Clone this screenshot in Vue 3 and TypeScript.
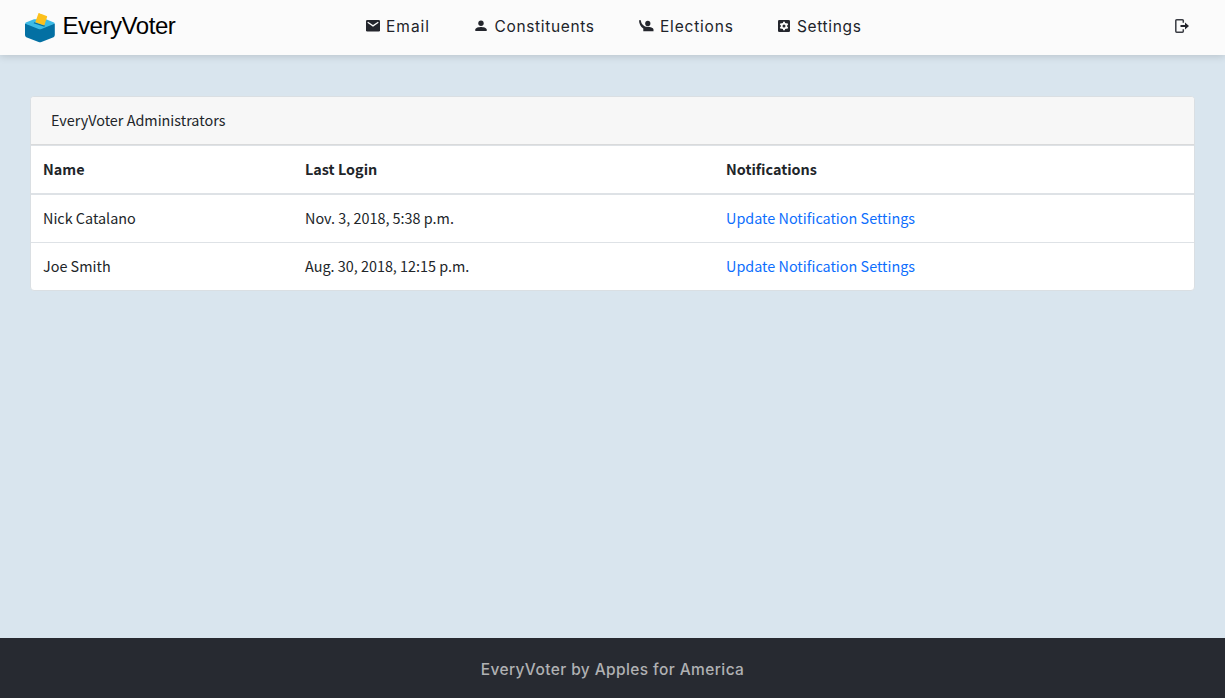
<script setup lang="ts">
interface NavItem { key: string; label: string }
interface Admin { name: string; lastLogin: string }

const navItems: NavItem[] = [
  { key: 'email', label: 'Email' },
  { key: 'constituents', label: 'Constituents' },
  { key: 'elections', label: 'Elections' },
  { key: 'settings', label: 'Settings' },
]

const admins: Admin[] = [
  { name: 'Nick Catalano', lastLogin: 'Nov. 3, 2018, 5:38 p.m.' },
  { name: 'Joe Smith', lastLogin: 'Aug. 30, 2018, 12:15 p.m.' },
]
</script>

<template>
  <div class="page">
    <header class="navbar">
      <a class="brand">
        <svg class="brand-mark" width="30" height="30" viewBox="0 0 30 30">
          <path d="M0 10.500 15 14 29.800 10.500V22Q29.800 23.500 28.500 24.200L16.400 29Q15 29.600 13.600 29L1.300 24.200Q0 23.500 0 22Z" fill="#0370a3" />
          <path d="M.8 9.600 9 6.300H21L29 9.600Q30 10.400 28.800 11.100L16.500 15.900Q15 16.500 13.500 15.900L1 11.100Q-.2 10.400 .8 9.600Z" fill="#3cbbe6" />
          <path d="M9.300 9.200 20 12.500 19.300 13.700 8.600 10.300Z" fill="#0370a3" />
          <path d="M13.400 .6Q13.700-.1 14.500 .2L21.600 3.100Q22.300 3.400 22.100 4.100L19.300 12.600 10.300 9.300Z" fill="#fcc01c" />
        </svg>
        <span class="brand-name">EveryVoter</span>
      </a>

      <nav class="menu">
        <a v-for="item in navItems" :key="item.key" class="menu-item" :class="item.key">
          <svg v-if="item.key === 'email'" width="14" height="12" viewBox="0 0 14 12">
            <rect x="0" y="0" width="14" height="11.500" rx="1.300" fill="#24262d" />
            <path d="M1.700 2.300 7 5.900 12.300 2.300" fill="none" stroke="#fbfbfb" stroke-width="1.300" />
          </svg>
          <svg v-else-if="item.key === 'constituents'" width="12" height="12" viewBox="0 0 12 12">
            <circle cx="6" cy="3.200" r="2.700" fill="#24262d" />
            <path d="M.3 11V9.600C.3 7.800 4 7 6 7s5.700 .8 5.700 2.600V11Z" fill="#24262d" />
          </svg>
          <svg v-else-if="item.key === 'elections'" width="15" height="12" viewBox="0 0 15 12">
            <circle cx="8.800" cy="3.400" r="2.600" fill="#24262d" />
            <path d="M0 .3H1.900C2 2.600 3 4.700 5.200 5.900 6.200 6.500 7.300 6.700 8.800 6.800c2.300 .1 5.700 1 5.700 2.800V11.200H4.300V8.500C1.500 6.900 .1 3.600 0 .3Z" fill="#24262d" />
          </svg>
          <svg v-else width="12" height="12" viewBox="0 0 12 12">
            <rect width="12" height="12" rx="1.300" fill="#24262d" />
            <path d="M6 1.700V10.300M2.300 3.850 9.700 8.150M9.700 3.850 2.300 8.150" stroke="#fbfbfb" stroke-width="1.900" />
            <circle cx="6" cy="6" r="3.200" fill="#fbfbfb" />
            <circle cx="6" cy="6" r="1.500" fill="#24262d" />
          </svg>
          <span>{{ item.label }}</span>
        </a>
      </nav>

      <a class="logout">
        <svg width="15" height="14" viewBox="0 0 15 14">
          <path d="M8.300 3.800V1.700Q8.300 .8 7.400 .8H1.700Q.8 .8 .8 1.700V12.300Q.8 13.200 1.700 13.200H7.400Q8.300 13.200 8.300 12.300V10.200" fill="none" stroke="#3a3c43" stroke-width="1.500" />
          <path d="M5.500 6.100H10V3.600L14 7 10 10.400V7.900H5.500Z" fill="#24262d" />
        </svg>
      </a>
    </header>

    <main class="content">
      <section class="card">
        <div class="card-header">EveryVoter Administrators</div>
        <table>
          <colgroup><col class="c-name" /><col class="c-login" /><col /></colgroup>
          <thead>
            <tr>
              <th>Name</th>
              <th>Last Login</th>
              <th>Notifications</th>
            </tr>
          </thead>
          <tbody>
            <tr v-for="admin in admins" :key="admin.name">
              <td>{{ admin.name }}</td>
              <td>{{ admin.lastLogin }}</td>
              <td><a class="link">Update Notification Settings</a></td>
            </tr>
          </tbody>
        </table>
      </section>
    </main>

    <footer class="footer">EveryVoter by Apples for America</footer>
  </div>
</template>

<style>
body { margin: 0; background: #d9e5ee; }
</style>

<style scoped>
.page {
  display: flex;
  flex-direction: column;
  height: 698px;
  background: #d9e5ee;
  color: #212529;
  font-family: "Noto Sans CJK JP", "Noto Sans", sans-serif;
  font-size: 14.4px;
  overflow: hidden;
}
.page * { box-sizing: border-box; }
.navbar {
  display: grid;
  grid-template-columns: 366px 1fr 50px;
  flex: none;
  height: 55px;
  background: #fbfbfb;
  box-shadow: 0 1px 8px rgba(0, 0, 0, .16);
}
.brand { display: flex; align-items: center; padding-left: 25px; }
.brand-mark { flex: none; }
.brand-name {
  margin: -3px 0 0 7.5px;
  color: #000;
  font: 24px/28px "Liberation Sans", Arial, sans-serif;
  letter-spacing: -.45px;
}
.menu {
  display: flex;
  height: 52px;
  color: #212329;
  font-family: "Inter", sans-serif;
  font-size: 15.5px;
}
.menu-item { display: flex; align-items: center; white-space: nowrap; letter-spacing: .65px; }
.menu-item svg { flex: none; }
.email { width: 109px; gap: 6px; letter-spacing: 1px; }
.constituents { width: 164px; gap: 7.5px; }
.elections { width: 138.5px; gap: 6px; letter-spacing: .8px; }
.settings { gap: 7.5px; }
.logout { display: flex; align-items: center; height: 52px; }
.content { flex: 1; padding: 41px 30px 0; }
.card {
  border: 1px solid #dadfe3;
  border-radius: 4px;
  background: #fff;
  overflow: hidden;
}
.card-header {
  height: 48px;
  padding-left: 20px;
  border-bottom: 1px solid #d9dadb;
  background: #f7f7f7;
  line-height: 45px;
}
table { width: 100%; table-layout: fixed; border-collapse: separate; border-spacing: 0; }
.c-name { width: 262px; }
.c-login { width: 421px; }
th, td { padding: 0 12px 2px; text-align: left; white-space: nowrap; line-height: 45px; }
th { height: 50px; border-top: 1px solid #dee2e6; border-bottom: 2px solid #dee2e6; font-weight: 700; }
td { height: 47px; }
tbody tr + tr td { height: 48px; border-top: 1px solid #dee2e6; }
.link { color: #0d6efd; }
.footer {
  flex: none;
  height: 60px;
  background: #272a31;
  color: #b0b1b3;
  font-family: "Inter", sans-serif;
  font-size: 15.5px;
  font-weight: 500;
  letter-spacing: .4px;
  line-height: 63px;
  text-align: center;
}
</style>
